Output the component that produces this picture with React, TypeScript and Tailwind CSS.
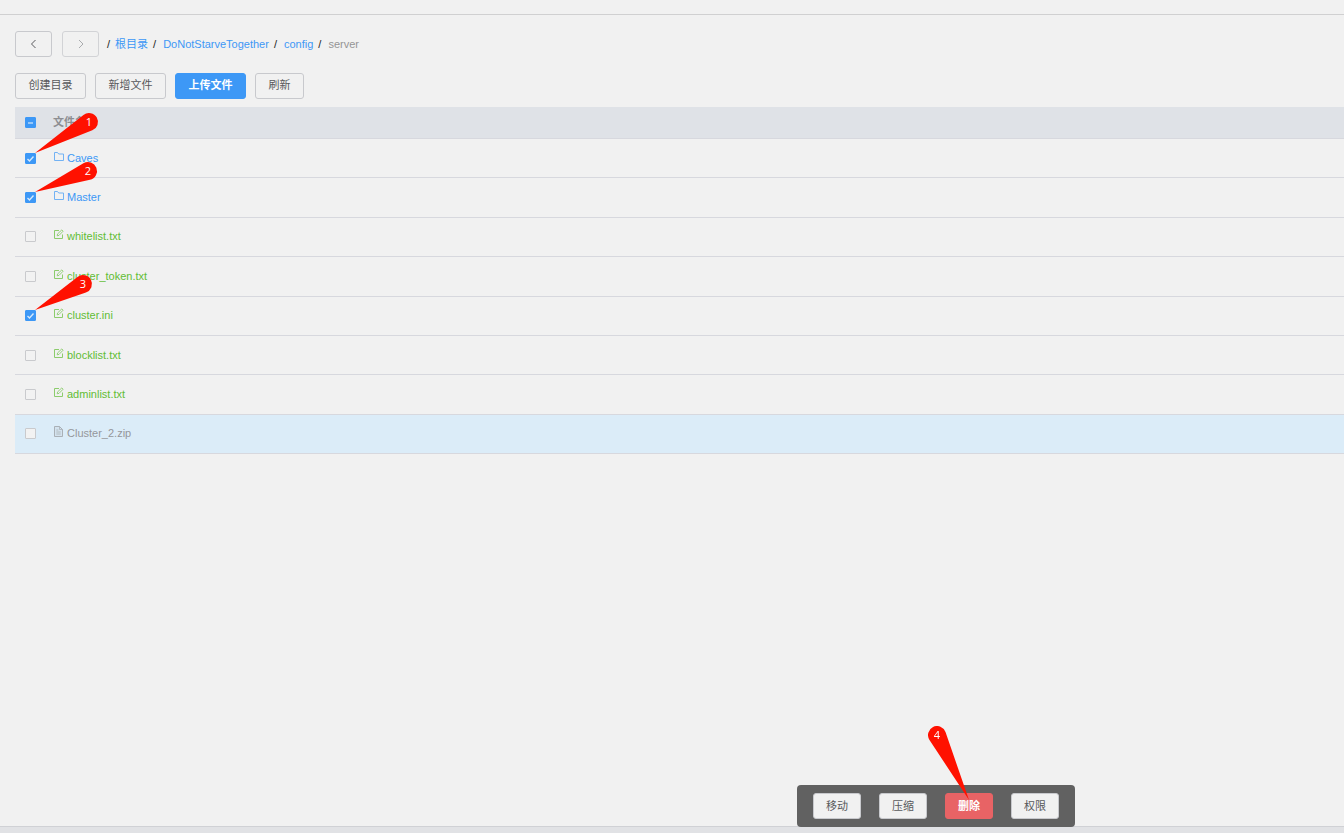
import React, { useEffect, useRef, useState } from 'react';
import clsx from 'clsx';

type FileKind = 'folder' | 'text' | 'archive';

interface FileEntry {
    name: string;
    kind: FileKind;
    step?: { label: string; dx: number; dy: number };
}

const files: FileEntry[] = [
    { name: 'Caves', kind: 'folder', step: { label: '1', dx: 54, dy: -31 } },
    { name: 'Master', kind: 'folder', step: { label: '2', dx: 53, dy: -21 } },
    { name: 'whitelist.txt', kind: 'text' },
    { name: 'cluster_token.txt', kind: 'text' },
    { name: 'cluster.ini', kind: 'text', step: { label: '3', dx: 48, dy: -26 } },
    { name: 'blocklist.txt', kind: 'text' },
    { name: 'adminlist.txt', kind: 'text' },
    { name: 'Cluster_2.zip', kind: 'archive' },
];

const kindColor: Record<FileKind, string> = {
    folder: 'text-[#3d98f6]',
    text: 'text-[#62bd35]',
    archive: 'text-[#95979b]',
};

// Teardrop marker: the tip is the origin, the round head sits at (dx, dy)
const Pin: React.FC<{ label: string; dx: number; dy: number }> = ({ label, dx, dy }) => {
    const r = 9;
    const dist = Math.hypot(dx, dy);
    const along = Math.sqrt(dist * dist - r * r);
    const angle = Math.atan2(dy, dx);
    const spread = Math.asin(r / dist);
    const x1 = along * Math.cos(angle - spread);
    const y1 = along * Math.sin(angle - spread);
    const x2 = along * Math.cos(angle + spread);
    const y2 = along * Math.sin(angle + spread);

    return (
        <svg width="1" height="1" className="block overflow-visible pointer-events-none">
            <path d={`M0 0L${x1} ${y1}A${r} ${r} 0 1 1 ${x2} ${y2}Z`} fill="#ff1100" />
            <text
                x={dx}
                y={dy + 4}
                textAnchor="middle"
                fill="#fff"
                className="text-[11px] font-['Open_Sans',sans-serif] font-normal"
            >
                {label}
            </text>
        </svg>
    );
};

const FileIcon: React.FC<{ kind: FileKind }> = ({ kind }) => (
    <svg width="11" height="11" viewBox="0 0 11 11" fill="none" stroke="currentColor" className="mb-[3px] shrink-0 opacity-70">
        {kind === 'folder' && <path d="M1.5 9.5v-8h3l1.2 1.5h4.800v6.500z" />}
        {kind === 'text' && (
            <>
                <path d="M6 1.5H1.5v8h8V5.500" />
                <path d="M4.200 6.800l.4-1.900L8.800.9l1.300 1.300L6 6.400z" strokeWidth="0.9" />
            </>
        )}
        {kind === 'archive' && (
            <>
                <path d="M1.500.5h5l3 3v7h-8z" fill="currentColor" fillOpacity="0.15" />
                <path d="M6.500.5v3h3M3.300 4h2M3.300 6h4.400M3.300 8h4.400" strokeWidth="0.8" />
            </>
        )}
    </svg>
);

interface CheckProps {
    label: string;
    checked: boolean;
    indeterminate?: boolean;
    onChange: () => void;
}

const Check: React.FC<CheckProps> = ({ label, checked, indeterminate = false, onChange }) => {
    const ref = useRef<HTMLInputElement>(null);

    useEffect(() => {
        if (ref.current) ref.current.indeterminate = indeterminate;
    }, [indeterminate]);

    return (
        <span className="grid size-[11px] place-items-center">
            <input
                ref={ref}
                type="checkbox"
                aria-label={label}
                checked={checked}
                onChange={onChange}
                className="col-start-1 row-start-1 size-[11px] appearance-none rounded-[1px] border border-[#c9cacd] bg-[#f2f2f2] checked:border-[#3d98f6] checked:bg-[#3d98f6] indeterminate:border-[#3d98f6] indeterminate:bg-[#3d98f6]"
            />
            <svg width="11" height="11" viewBox="0 0 11 11" fill="none" stroke="#d6e9fc" className="pointer-events-none col-start-1 row-start-1">
                {indeterminate && <path d="M3 6h5" strokeWidth="1.2" />}
                {checked && !indeterminate && <path d="M2.500 6l2 2L8.500 3.500" strokeWidth="1.4" />}
            </svg>
        </span>
    );
};

const buttonBase = 'flex h-[26px] items-center justify-center rounded-[3px] border';
const plainButton = 'border-[#c8c9cd] bg-[#f1f1f1] text-[#58595c]';

const crumbs = ['根目录', 'DoNotStarveTogether', 'config'];

export default function App() {
    const [selected, setSelected] = useState<string[]>(['Caves', 'Master', 'cluster.ini']);
    const allSelected = selected.length === files.length;

    const toggle = (name: string) =>
        setSelected((prev) => (prev.includes(name) ? prev.filter((n) => n !== name) : [...prev, name]));

    return (
        <div className="flex min-h-screen flex-col bg-[#f1f1f1] font-['Liberation_Sans','Noto_Sans_CJK_SC',sans-serif] text-[11px] leading-4 text-[#58595c]">
            <header className="h-[15px] border-b border-[#d0d0d1]" />

            <main className="flex-1 pt-4 pl-[15px]">
                {/* Path navigation */}
                <div className="flex items-center">
                    <button aria-label="后退" className={clsx(buttonBase, plainButton, 'mr-2.5 w-[37px]')}>
                        <svg width="6" height="10" viewBox="0 0 6 10" fill="none" stroke="currentColor">
                            <path d="M4.500 1l-4 4 4 4" />
                        </svg>
                    </button>
                    <button aria-label="前进" disabled className={clsx(buttonBase, 'mr-2 w-[37px] border-[#d2d3d6] text-[#a9abae]')}>
                        <svg width="6" height="10" viewBox="0 0 6 10" fill="none" stroke="currentColor">
                            <path d="M1 1l4 4-4 4" />
                        </svg>
                    </button>
                    <nav aria-label="路径" className="flex items-center gap-[5px]">
                        <span className="text-[#222]">/</span>
                        {crumbs.map((crumb, i) => (
                            <React.Fragment key={crumb}>
                                <a href="#" className={clsx('text-[#3d98f6]', i > 0 && 'ml-0.5')}>
                                    {crumb}
                                </a>
                                <span className="text-[#222]">/</span>
                            </React.Fragment>
                        ))}
                        <span className="ml-0.5 text-[#959595]">server</span>
                    </nav>
                </div>

                {/* Actions */}
                <div className="mt-4 flex gap-[9px]">
                    <button className={clsx(buttonBase, plainButton, 'w-[71px] pb-0.5')}>创建目录</button>
                    <button className={clsx(buttonBase, plainButton, 'w-[71px] pb-0.5')}>新增文件</button>
                    <button className={clsx(buttonBase, 'w-[71px] border-[#3d98f6] bg-[#3d98f6] pb-0.5 font-bold text-white')}>上传文件</button>
                    <button className={clsx(buttonBase, plainButton, 'w-[49px] pb-0.5')}>刷新</button>
                </div>

                {/* File list */}
                <table className="mt-2 h-[347px] w-full border-separate border-spacing-0 text-left">
                    <thead>
                        <tr className="h-8 bg-[#dfe2e7] text-[#8d8e92]">
                            <th className="w-[38px] border-b border-[#d7d8de] p-0 pl-2.5">
                                <Check
                                    label="全选"
                                    checked={allSelected}
                                    indeterminate={selected.length > 0 && !allSelected}
                                    onChange={() => setSelected(allSelected ? [] : files.map((f) => f.name))}
                                />
                            </th>
                            <th className="border-b border-[#d7d8de] p-0 pb-0.5 font-bold">文件名</th>
                        </tr>
                    </thead>
                    <tbody>
                        {files.map((file) => (
                            <tr key={file.name} className={file.kind === 'archive' ? 'bg-[#dbecf8]' : ''}>
                                <td className="border-b border-[#d7d8de] p-0 pl-2.5">
                                    <div className="relative w-[11px]">
                                        <Check
                                            label={file.name}
                                            checked={selected.includes(file.name)}
                                            onChange={() => toggle(file.name)}
                                        />
                                        {file.step && (
                                            <div className="absolute top-0 left-2.5 z-10">
                                                <Pin {...file.step} />
                                            </div>
                                        )}
                                    </div>
                                </td>
                                <td className="border-b border-[#d7d8de] p-0 pb-0.5">
                                    <a href="#" className={clsx('inline-flex items-center gap-[3px] align-middle', kindColor[file.kind])}>
                                        <FileIcon kind={file.kind} />
                                        {file.name}
                                    </a>
                                </td>
                            </tr>
                        ))}
                    </tbody>
                </table>
            </main>

            <footer className="h-[7px] border-t border-[#d0d1d5] bg-[#e1e2e5]" />

            {/* Batch actions for the selected files */}
            <div className="fixed bottom-1.5 left-[797px] flex gap-[18px] rounded-[4px] bg-[#616161] px-4 py-2">
                <button className={clsx(buttonBase, plainButton, 'w-12')}>移动</button>
                <button className={clsx(buttonBase, plainButton, 'w-12')}>压缩</button>
                <button className={clsx(buttonBase, 'relative w-12 border-[#e86365] bg-[#e86365] font-bold text-white')}>
                    删除
                    <span className="absolute top-1.5 left-1/2">
                        <Pin label="4" dx={-32} dy={-65} />
                    </span>
                </button>
                <button className={clsx(buttonBase, plainButton, 'w-12')}>权限</button>
            </div>
        </div>
    );
}
